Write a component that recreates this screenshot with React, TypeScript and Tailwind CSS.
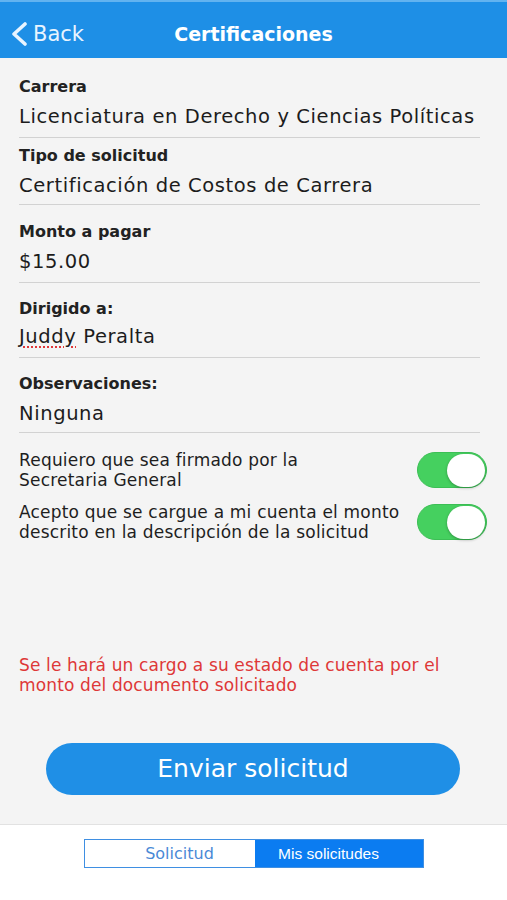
import React from "react";

const fields: { label: string; value: string; wrap: string; gap: string; pb: string; underline?: boolean }[] = [
  { label: "Carrera", value: "Licenciatura en Derecho y Ciencias Políticas", wrap: "pt-[19px]", gap: "mt-[8px]", pb: "pb-[8px]" },
  { label: "Tipo de solicitud", value: "Certificación de Costos de Carrera", wrap: "pt-[8px]", gap: "mt-[8px]", pb: "pb-[6px]" },
  { label: "Monto a pagar", value: "$15.00", wrap: "pt-[17px]", gap: "mt-[8px]", pb: "pb-[8px]" },
  { label: "Dirigido a:", value: "Peralta", wrap: "pt-[16px]", gap: "mt-[6px]", pb: "pb-[8px]", underline: true },
  { label: "Observaciones:", value: "Ninguna", wrap: "pt-[16px]", gap: "mt-[8px]", pb: "pb-[6px]" },
];

function Toggle() {
  return (
    <div className="w-[70px] h-[36px] rounded-full bg-[#45d05f] border border-[#3cbf55] flex items-center justify-end pr-[1px] shrink-0">
      <div className="w-[38px] h-[33px] rounded-full bg-white shadow-[0_1px_3px_rgba(0,0,0,0.3)]" />
    </div>
  );
}

export default function App() {
  return (
    <div
      className="w-full h-[900px] bg-[#f4f4f4] flex flex-col overflow-hidden"
      style={{ fontFamily: '"DejaVu Sans", sans-serif' }}
    >
      {/* Header */}
      <div className="h-[58px] bg-[#1e8fe6] border-t-2 border-[#62b3f0] flex items-center pt-[7px] shrink-0">
        <div className="w-[100px] flex items-center pl-[10px] gap-[5px] text-[#e8f4ff]">
          <svg width="18" height="24" viewBox="0 0 18 24" fill="none">
            <polyline points="15,2 4,12 15,22" stroke="#e8f4ff" strokeWidth="3.6" strokeLinecap="round" strokeLinejoin="round" />
          </svg>
          <span className="text-[21px] leading-[26px]">Back</span>
        </div>
        <div className="flex-1 text-center text-white font-bold text-[19px] leading-[24px]">Certificaciones</div>
        <div className="w-[100px]" />
      </div>

      {/* Main */}
      <div className="flex-1 flex flex-col">
        {fields.map((f) => (
          <div key={f.label} className={`ml-[19px] mr-[27px] border-b border-[#d2d2d2] ${f.wrap} ${f.pb}`}>
            <div className="text-[16px] leading-[20px] font-bold text-[#222]">{f.label}</div>
            <div className={`${f.gap} text-[19.5px] leading-[24px] tracking-[0.6px] text-[#1c1c1c] whitespace-nowrap`}>
              {f.underline ? (
                <>
                  <span className="underline decoration-dotted decoration-[#e0383a] decoration-2 underline-offset-[3px]">Juddy</span>{" "}
                  {f.value}
                </>
              ) : (
                f.value
              )}
            </div>
          </div>
        ))}

        <div className="mt-[17px] ml-[19px] mr-[20px] flex items-center justify-between">
          <div className="text-[17px] leading-[20px] tracking-[0.2px] text-[#1e1e1e] whitespace-nowrap">
            Requiero que sea firmado por la
            <br />
            Secretaria General
          </div>
          <Toggle />
        </div>
        <div className="mt-[12px] ml-[19px] mr-[20px] flex items-center justify-between">
          <div className="text-[17px] leading-[20px] tracking-[0.2px] text-[#1e1e1e] whitespace-nowrap">
            Acepto que se cargue a mi cuenta el monto
            <br />
            descrito en la descripción de la solicitud
          </div>
          <Toggle />
        </div>

        <div className="mt-[113px] ml-[19px] text-[17px] leading-[20px] tracking-[0.13px] text-[#de3838] whitespace-nowrap">
          Se le hará un cargo a su estado de cuenta por el
          <br />
          monto del documento solicitado
        </div>

        <div className="mt-[48px] ml-[46px] w-[414px] h-[52px] rounded-full bg-[#1f8fe6] flex items-center justify-center text-white text-[25px] leading-[30px]">
          Enviar solicitud
        </div>
      </div>

      {/* Bottom bar */}
      <div className="h-[76px] bg-white border-t border-[#e2e2e2] shrink-0 flex justify-center pt-[14px]">
        <div className="w-[340px] h-[29px] border border-[#3f8fe2] flex">
          <div className="w-[170px] h-full flex items-center justify-center pl-[20px] text-[16px] text-[#4a89d6] bg-white">
            Solicitud
          </div>
          <div
            className="flex-1 h-full flex items-center justify-center pr-[20px] text-[15.5px] text-white bg-[#0b7cf1]"
            style={{ fontFamily: '"Liberation Sans", sans-serif' }}
          >
            Mis solicitudes
          </div>
        </div>
      </div>
    </div>
  );
}
